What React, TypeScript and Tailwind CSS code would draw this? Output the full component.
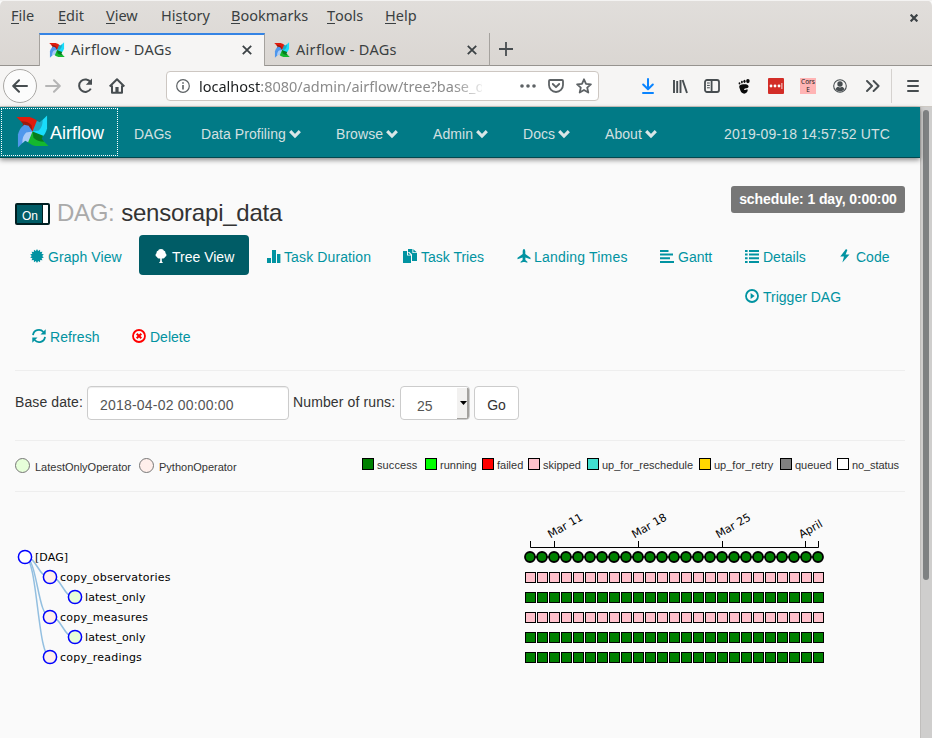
import React from "react";

function Pinwheel({ size }: { size: number }) {
  const blades = [
    ["#e01b0c", "#9c1a0e"],
    ["#19dcfa", "#1fa9c4"],
    ["#14b82e", "#067c1e"],
    ["#4f97ec", "#a9cbf7"],
  ];
  return (
    <svg width={size} height={size} viewBox="0 0 34 34" className="block shrink-0">
      {blades.map(([main, dark], i) => (
        <g key={main} transform={`rotate(${i * 90} 17 17)`}>
          <path d="M0.5 2 H14 C18 3 21.5 5 24 8.5 L23 13 L17 17 L11 12 L7 8.5 Z" fill={main} />
          <path d="M5 6.5 C10 6.5 13 7.5 16 10.5 L17 17 L6 12.5 L7.5 9.5 Z" fill={dark} />
        </g>
      ))}
    </svg>
  );
}

function Chevron() {
  return (
    <svg width="12" height="10" viewBox="0 0 12 10" className="mt-px shrink-0">
      <path d="M1.2 2.2 L6 7 L10.8 2.2" fill="none" stroke="#d9e6e7" strokeWidth="3.1" />
    </svg>
  );
}

function Close({ size = 10, width = 1.8 }: { size?: number; width?: number }) {
  return (
    <svg width={size} height={size} viewBox="0 0 10 10" className="shrink-0">
      <path d="M0.8 0.8 L9.2 9.2 M9.2 0.8 L0.8 9.2" stroke="#3c4245" strokeWidth={width} />
    </svg>
  );
}

const menus = [
  ["", "F", "ile", "w-[47px]"],
  ["", "E", "dit", "w-[48px]"],
  ["", "V", "iew", "w-[55px]"],
  ["Hi", "s", "tory", "w-[70px]"],
  ["", "B", "ookmarks", "w-[96px]"],
  ["", "T", "ools", "w-[58px]"],
  ["", "H", "elp", "w-[60px]"],
];

function MenuBar() {
  return (
    <div className="flex h-[33px] items-center border-t border-[#f4f3f2] pb-[3px] pl-[11px] pr-[14px] text-[#3a3f41]">
      {menus.map(([a, u, b, w]) => (
        <span key={b} className={`${w} flex shrink-0 text-[14.5px] leading-[15px]`}>
          {a}
          <span className="h-4 border-b border-[#3a3f41]">{u}</span>
          {b}
        </span>
      ))}
      <div className="mt-1 ml-auto">
        <Close size={8} width={2.8} />
      </div>
    </div>
  );
}

function TabBar() {
  return (
    <div className="flex h-[33px] text-[14.5px] text-[#3a3f41]">
      <div className="w-[39px] border-b border-[#96938f]" />
      <div className="flex w-[226px] items-center border-x border-t-2 border-x-[#a5a29e] border-t-[#3584e4] bg-[#f6f5f4] pb-[2px] pl-[9px] pr-[12px]">
        <Pinwheel size={16} />
        <span className="ml-[6px] tracking-[0.3px]">Airflow - DAGs</span>
        <div className="ml-auto"><Close /></div>
      </div>
      <div className="flex w-[225px] items-center border-b border-r border-b-[#96938f] border-r-[#a5a29e] pl-[9px] pr-[12px] pt-[2px]">
        <Pinwheel size={16} />
        <span className="ml-[6px] tracking-[0.3px]">Airflow - DAGs</span>
        <div className="ml-auto"><Close /></div>
      </div>
      <div className="flex flex-1 items-center border-b border-[#96938f] pl-[9px]">
        <svg width="14" height="14" viewBox="0 0 14 14">
          <path d="M7 0 V14 M0 7 H14" stroke="#474d50" strokeWidth="1.8" />
        </svg>
      </div>
    </div>
  );
}

function Toolbar() {
  const ink = "#474d50";
  return (
    <div className="flex h-[41px] items-center border-b border-[#cfcac4] bg-[#f6f5f4] pl-[3px]">
      <div className="flex size-[34px] shrink-0 items-center justify-center rounded-full border border-[#aaa8a5] bg-[#fcfcfc]">
        <svg width="16" height="14" viewBox="0 0 16 14" fill="none" stroke={ink} strokeWidth="2" strokeLinecap="round" strokeLinejoin="round">
          <path d="M15 7 H1.5 M7 1.2 L1.2 7 L7 12.8" />
        </svg>
      </div>
      <svg className="ml-2 shrink-0" width="16" height="14" viewBox="0 0 16 14" fill="none" stroke="#b5b5b5" strokeWidth="2" strokeLinecap="round" strokeLinejoin="round">
        <path d="M1 7 H14.5 M9 1.2 L14.8 7 L9 12.8" />
      </svg>
      <svg className="ml-4 shrink-0" width="16" height="16" viewBox="0 0 16 16" fill="none" stroke={ink} strokeWidth="2">
        <path d="M13.6 4.4 A6.2 6.2 0 1 0 13.8 10.6" />
        <path d="M15 0.5 V6.8 H8.8 Z" fill={ink} stroke="none" />
      </svg>
      <svg className="ml-4 shrink-0" width="16" height="16" viewBox="0 0 16 16">
        <path d="M0.7 8.5 L8 1.3 L15.3 8.5 M3 7.5 V14.8 H13 V7.5" fill="none" stroke={ink} strokeWidth="2" strokeLinejoin="round" />
        <path d="M6.4 9 H9.6 V15 H6.4 Z" fill={ink} />
      </svg>
      <div className="ml-[41px] flex h-[30px] w-[433px] shrink-0 items-center rounded-[4px] border border-[#cdc7c2] bg-white pl-[9px] pr-[6px]">
        <svg width="14" height="14" viewBox="0 0 14 14" className="shrink-0">
          <circle cx="7" cy="7" r="6.3" fill="none" stroke="#5d6265" strokeWidth="1.2" />
          <path d="M7 6 V10.5 M7 3.2 V4.8" stroke="#5d6265" strokeWidth="1.6" />
        </svg>
        <div className="ml-[9px] w-[283px] shrink-0 pt-px whitespace-nowrap text-[14.5px] text-[#8b8b8b] [mask-image:linear-gradient(to_right,#000_90%,transparent_102%)]">
          <span className="text-[#1c1f20]">localhost</span>:8080/admin/airflow/tree?base_d
        </div>
        <svg width="16" height="4" viewBox="0 0 16 4" className="ml-[38px] shrink-0" fill="#5d6265">
          <circle cx="2" cy="2" r="1.8" /><circle cx="8" cy="2" r="1.8" /><circle cx="14" cy="2" r="1.8" />
        </svg>
        <svg width="16" height="14" viewBox="0 0 16 14" className="ml-3 shrink-0" fill="none" stroke="#5d6265" strokeWidth="1.8" strokeLinecap="round" strokeLinejoin="round">
          <path d="M2 1 H14 Q15 1 15 2 V6 A7 7 0 0 1 1 6 V2 Q1 1 2 1 Z M4.8 5 L8 8.2 L11.2 5" />
        </svg>
        <svg width="16" height="16" viewBox="0 0 16 16" className="ml-3 shrink-0" fill="none" stroke="#5d6265" strokeWidth="1.8" strokeLinejoin="round">
          <path d="M8 1.3 L10 5.8 L14.9 6.3 L11.2 9.6 L12.3 14.5 L8 12 L3.7 14.5 L4.8 9.6 L1.1 6.3 L6 5.8 Z" />
        </svg>
      </div>
      <svg className="ml-[43px] shrink-0" width="12" height="16" viewBox="0 0 12 16" fill="none" stroke="#0a84ff" strokeWidth="2" strokeLinecap="round" strokeLinejoin="round">
        <path d="M6 1 V11 M1.2 6.5 L6 11.3 L10.8 6.5 M1 15 H11" />
      </svg>
      <svg className="ml-[19px] shrink-0" width="15" height="15" viewBox="0 0 15 15" stroke={ink} strokeWidth="1.9">
        <path d="M1 1 V14 M4.2 2 V14 M7.5 1 V14 M9.6 1 L14 14" />
      </svg>
      <svg className="ml-4 shrink-0" width="16" height="14" viewBox="0 0 16 14" fill="none" stroke={ink} strokeWidth="1.8">
        <rect x="1" y="1" width="14" height="12" rx="2" />
        <path d="M7.6 1 V13" />
        <path d="M3 4 H5.8 M3 6.4 H5.8 M3 8.8 H5.8" strokeWidth="1" />
      </svg>
      <svg className="ml-[18px] shrink-0" width="12" height="15" viewBox="0 0 12 15" fill="#0a0a0a">
        <path fillRule="evenodd" d="M1.6 6.6 C3.6 4.8 10.6 4.6 10.6 7.4 C10.4 9.8 7 8.6 6.2 10 C5.8 11.4 7.4 11.4 8 10.4 L9.8 10.6 C9.8 15.6 3.6 16 2.4 11.6 C2 9.8 0.6 8 1.6 6.6 Z" />
        <ellipse cx="9.9" cy="2.1" rx="1.8" ry="2.1" />
        <ellipse cx="6.5" cy="2.3" rx="1.1" ry="1.6" />
        <ellipse cx="3.9" cy="3.1" rx="0.9" ry="1.3" />
        <ellipse cx="1.5" cy="4.4" rx="0.9" ry="1.1" />
      </svg>
      <div className="ml-[18px] flex size-4 shrink-0 items-center justify-center rounded-[1px] bg-[#d32d27]">
        <svg width="14" height="6" viewBox="0 0 14 6" fill="#fff">
          <circle cx="2" cy="3" r="1.4" /><circle cx="6" cy="3" r="1.4" /><circle cx="10" cy="3" r="1.4" />
          <rect x="12.5" y="0" width="0.8" height="6" />
        </svg>
      </div>
      <div className="ml-4 flex size-4 shrink-0 flex-col items-center bg-[#ffb4b4] text-[6.5px] leading-[8px] text-[#222]">
        <span>Cors</span>
        <span>E</span>
      </div>
      <svg className="ml-[17px] shrink-0" width="14" height="14" viewBox="0 0 14 14">
        <circle cx="7" cy="7" r="6.3" fill="none" stroke={ink} strokeWidth="1.1" />
        <circle cx="7" cy="5" r="2.7" fill={ink} />
        <path d="M2.5 10 Q4 7.8 5 7.8 Q7 9 9 7.8 Q10 7.8 11.5 10 A5.3 5.3 0 0 1 2.5 10 Z" fill={ink} />
      </svg>
      <svg className="ml-[19px] shrink-0" width="14" height="12" viewBox="0 0 14 12" fill="none" stroke={ink} strokeWidth="1.9" strokeLinecap="round" strokeLinejoin="round">
        <path d="M1 1 L6 6 L1 11 M7.6 1 L12.6 6 L7.6 11" />
      </svg>
      <div className="ml-[11px] h-[34px] w-px shrink-0 bg-[#d5d2cf]" />
      <svg className="ml-[15px] shrink-0" width="12" height="12" viewBox="0 0 12 12" stroke={ink} strokeWidth="2" strokeLinecap="round">
        <path d="M1 1 H11 M1 6 H11 M1 11 H11" />
      </svg>
    </div>
  );
}

const navItems = [
  ["Data Profiling", "w-[135px]"],
  ["Browse", "w-[97px]"],
  ["Admin", "w-[90px]"],
  ["Docs", "w-[82px]"],
  ["About", "w-[100px]"],
];

function NavBar() {
  return (
    <nav className="relative flex h-[51px] shrink-0 items-center border-b border-[#03484f] bg-[#017a86] text-sm text-[#d3e0e1] shadow-[0_2px_5px_rgba(0,0,0,0.45)]">
      <div className="mb-px ml-px flex h-[48px] w-[117px] shrink-0 items-center border border-dotted border-white pl-[14px]">
        <Pinwheel size={33} />
        <span className="mt-[5px] ml-px text-[18px] text-white">Airflow</span>
      </div>
      <span className="ml-4 w-[67px] shrink-0 pt-[3px]">DAGs</span>
      {navItems.map(([label, w]) => (
        <span key={label} className={`${w} flex shrink-0 items-center gap-[3px] pt-[3px]`}>
          <span className="tracking-[0.06px]">{label}</span>
          <Chevron />
        </span>
      ))}
      <span className="mr-[30px] ml-auto pt-[3px] tracking-[0.14px] whitespace-nowrap">2019-09-18 14:57:52 UTC</span>
    </nav>
  );
}

function Glyph({ name }: { name: string }) {
  const teal = "#0193a1";
  const box = { width: 14, height: 14, viewBox: "0 0 14 14", className: "mt-[2px] shrink-0" };
  switch (name) {
    case "graph": {
      const pts = Array.from({ length: 28 }, (_, i) => {
        const r = i % 2 ? 5.1 : 7;
        const a = (i * Math.PI) / 14;
        return `${7 + r * Math.sin(a)},${7 - r * Math.cos(a)}`;
      }).join(" ");
      return <svg {...box}><polygon points={pts} fill={teal} /></svg>;
    }
    case "tree":
      return (
        <svg {...box} fill="#fff">
          <path d="M7 0 C9 0 9.6 1 9.9 1.7 C11.6 2 11.6 3.5 11.3 4 C13 5.2 12.8 7.5 11 7.9 C10.6 9.4 8.8 9.6 7.8 9.4 V12.2 L9 14 H5 L6.2 12.2 V9.4 C5.2 9.6 3.4 9.4 3 7.9 C1.2 7.5 1 5.2 2.7 4 C2.4 3.5 2.4 2 4.1 1.7 C4.4 1 5 0 7 0 Z" />
        </svg>
      );
    case "duration":
      return <svg {...box} fill={teal}><path d="M0 9 H4 V14 H0 Z M5 1 H9 V14 H5 Z M10 5 H13.4 V14 H10 Z" /></svg>;
    case "tries":
      return (
        <svg {...box} fill={teal}>
          <path d="M0 2 H4 V6.5 H8 V14 H0 Z" />
          <path d="M5 0 H9.4 V4 H14 V12 H9 V5.5 L6.5 3 H5 Z" />
          <path d="M10.3 0.2 L13.8 3.2 H10.3 Z M5 3.2 L7.6 5.7 H5 Z" />
        </svg>
      );
    case "landing":
      return (
        <svg {...box} fill={teal}>
          <path d="M7 0 C8 0 8.3 1.5 8.3 2.6 V5 L13.5 8.8 V10.2 L8.4 8.4 V11 L10.4 12.8 V13.8 L7.8 13 H6.2 L3.6 13.8 V12.8 L5.6 11 V8.4 L0.5 10.2 V8.8 L5.7 5 V2.6 C5.7 1.5 6 0 7 0 Z" />
        </svg>
      );
    case "gantt":
      return <svg {...box} fill={teal}><path d="M0 1 H8.5 V3 H0 Z M0 4.6 H13 V6.6 H0 Z M0 8.2 H10 V10.2 H0 Z M0 12 H14 V14 H0 Z" /></svg>;
    case "details":
      return (
        <svg {...box} fill={teal}>
          <path d="M0 1 H2.6 V3 H0 Z M4 1 H14 V3 H4 Z M0 4.6 H2.6 V6.6 H0 Z M4 4.6 H14 V6.6 H4 Z M0 8.2 H2.6 V10.2 H0 Z M4 8.2 H14 V10.2 H4 Z M0 12 H2.6 V14 H0 Z M4 12 H14 V14 H4 Z" />
        </svg>
      );
    case "code":
      return <svg {...box} fill={teal}><path d="M8 0 L2.2 7.6 H6 L4.4 13.5 L11.5 5.6 H7.6 L9.4 1 Z" /></svg>;
    case "trigger":
      return (
        <svg {...box}>
          <circle cx="7" cy="7" r="6" fill="none" stroke={teal} strokeWidth="1.8" />
          <path d="M5.6 4 L9.6 7 L5.6 10 Z" fill={teal} />
        </svg>
      );
    case "refresh":
      return (
        <svg {...box}>
          <path d="M1 6.2 C1.6 1 8 -0.8 11.4 3 M13 7.8 C12.4 13 6 14.8 2.6 11" fill="none" stroke={teal} strokeWidth="1.8" />
          <path d="M13.7 0.2 V5.4 H8.5 Z M0.3 13.8 V8.6 H5.5 Z" fill={teal} />
        </svg>
      );
    default:
      return (
        <svg {...box} fill="none" stroke="#f00">
          <circle cx="7" cy="7" r="6" strokeWidth="1.8" />
          <path d="M4.7 4.7 L9.3 9.3 M9.3 4.7 L4.7 9.3" strokeWidth="2" />
        </svg>
      );
  }
}

const views = [
  ["graph", "Graph View", "ml-[15px] w-[109px] gap-1 tracking-[0.08px]"],
  ["tree", "Tree View", "w-[110px] gap-1 rounded-[4px] bg-[#005c66] pl-[15px] text-white"],
  ["duration", "Task Duration", "ml-[18px] w-[136px] gap-[3px] tracking-[0.12px]"],
  ["tries", "Task Tries", "w-[114px] gap-1"],
  ["landing", "Landing Times", "w-[143px] gap-[3px] tracking-[0.2px]"],
  ["gantt", "Gantt", "w-[85px] gap-1"],
  ["details", "Details", "w-[93px] gap-1"],
  ["code", "Code", "w-[60px] gap-1"],
];

function Pills() {
  return (
    <div className="-mt-px text-sm text-[#0193a1]">
      <div className="flex">
        {views.map(([icon, label, w]) => (
          <a key={icon} className={`${w} flex h-10 shrink-0 items-center whitespace-nowrap`}>
            <Glyph name={icon} />
            <span className="pt-[3px]">{label}</span>
          </a>
        ))}
      </div>
      <div className="flex h-10 items-center gap-1 pl-[730px]">
        <Glyph name="trigger" />
        <span className="pt-[3px]">Trigger DAG</span>
      </div>
      <div className="flex h-10 items-center pl-[17px]">
        <a className="flex w-[100px] items-center gap-1"><Glyph name="refresh" /><span className="pt-[3px] tracking-[0.1px]">Refresh</span></a>
        <a className="flex items-center gap-1"><Glyph name="delete" /><span className="pt-[3px]">Delete</span></a>
      </div>
    </div>
  );
}

function RunForm() {
  return (
    <div className="flex h-[69px] items-start border-t border-[#eee] pt-[15px] text-sm text-[#333]">
      <span className="mt-[6px] w-[72px] shrink-0 tracking-[0.1px] whitespace-nowrap">Base date:</span>
      <div className="h-[34px] w-[202px] rounded-[4px] border border-[#ccc] bg-white pt-[8px] pl-[12px] tracking-[0.2px] text-[#555] shadow-[inset_0_1px_1px_rgba(0,0,0,0.075)]">
        2018-04-02 00:00:00
      </div>
      <span className="mt-[6px] ml-1 w-[107px] shrink-0 tracking-[0.12px] whitespace-nowrap">Number of runs:</span>
      <div className="flex h-[34px] w-[70px] overflow-hidden rounded-[4px] border border-[#ccc] bg-white text-[#555]">
        <span className="w-[56px] pt-[9px] pl-4">25</span>
        <div className="mt-px flex h-[32px] w-[12px] items-center justify-center border-r-2 border-b-2 border-[#a3a19e] bg-[#f2f1f0]">
          <svg width="7" height="4" viewBox="0 0 7 4" className="ml-[2px] shrink-0"><path d="M0 0 H7 L3.5 4 Z" fill="#000" /></svg>
        </div>
      </div>
      <button className="ml-1 h-[34px] w-[45px] rounded-[4px] border border-[#ccc] bg-white pt-[3px] text-[#333]">Go</button>
    </div>
  );
}

const states = [
  ["success", "bg-[#008000]", "w-[63px] tracking-[0.1px]"],
  ["running", "bg-[#00ff00]", "w-[57px]"],
  ["failed", "bg-[#ff0000]", "w-[46px]"],
  ["skipped", "bg-[#ffc0cb]", "w-[59px]"],
  ["up_for_reschedule", "bg-[#40e0d0]", "w-[112px]"],
  ["up_for_retry", "bg-[#ffd700]", "w-[81px]"],
  ["queued", "bg-[#808080]", "w-[57px]"],
  ["no_status", "bg-white", "w-[68px] tracking-[-0.1px]"],
];

function Legend() {
  return (
    <div className="flex h-[52px] items-start border-y border-[#eee] text-[11px] leading-[14px] text-[#333]">
      <div className="mt-[17px] flex w-[124px] items-start">
        <span className="size-[15px] rounded-full border border-[#777] bg-[#e6ffd9]" />
        <span className="ml-[5px] pt-[2px]">LatestOnlyOperator</span>
      </div>
      <div className="mt-[17px] flex items-start">
        <span className="size-[15px] rounded-full border border-[#777] bg-[#ffefeb]" />
        <span className="ml-[5px] pt-[2px]">PythonOperator</span>
      </div>
      <div className="mt-[17px] ml-auto flex">
        {states.map(([label, bg, w]) => (
          <div key={label} className={`${w} flex shrink-0 items-start`}>
            <span className={`${bg} size-3 shrink-0 border border-black`} />
            <span className="ml-[3px]">{label}</span>
          </div>
        ))}
      </div>
    </div>
  );
}

const nodes = [
  { x: 10, y: 65, label: "[DAG]", fill: "#fff" },
  { x: 35, y: 85, label: "copy_observatories", fill: "#ffefeb" },
  { x: 60, y: 105, label: "latest_only", fill: "#e6ffd9" },
  { x: 35, y: 125, label: "copy_measures", fill: "#ffefeb" },
  { x: 60, y: 145, label: "latest_only", fill: "#e6ffd9" },
  { x: 35, y: 165, label: "copy_readings", fill: "#ffefeb" },
];
const links = [[0, 1], [0, 3], [0, 5], [1, 2], [3, 4]];
const rowColors = ["#ffc0cb", "#008000", "#ffc0cb", "#008000", "#008000"];
const ticks: [number, string][] = [[539.5, "Mar 11"], [623.5, "Mar 18"], [707.5, "Mar 25"], [790.5, "April"]];

function TreeChart() {
  const runs = Array.from({ length: 25 }, (_, i) => i);
  return (
    <svg width="890" height="240" viewBox="0 0 890 240" className="block" fontFamily="'DejaVu Sans', sans-serif" fontSize="11">
      {links.map(([a, b]) => {
        const s = nodes[a];
        const t = nodes[b];
        const m = (s.x + t.x) / 2;
        return <path key={`${a}-${b}`} d={`M${s.x} ${s.y} C${m} ${s.y} ${m} ${t.y} ${t.x} ${t.y}`} fill="none" stroke="#93bfe0" strokeWidth="1.5" />;
      })}
      {nodes.map((n) => (
        <g key={n.y}>
          <circle cx={n.x} cy={n.y} r="6.6" fill={n.fill} stroke="#0000ff" strokeWidth="1.5" />
          <text x={n.x + 10} y={n.y + 4} fill="#000" letterSpacing={n.label.startsWith("copy") ? 0.21 : 0.08}>{n.label}</text>
        </g>
      ))}
      <path d="M515.5 49 V55.5 H803.5 V49" fill="none" stroke="#000" />
      {ticks.map(([x, label]) => (
        <g key={label}>
          <path d={`M${x} 49 V55`} stroke="#000" />
          <text transform={`translate(${x - 4} 46.5) rotate(-30)`}>{label}</text>
        </g>
      ))}
      <path d="M515 65 H803" stroke="#555" strokeWidth="2" />
      {runs.map((i) => (
        <circle key={i} cx={515 + i * 12} cy={65} r="5" fill="#008000" stroke="#000" strokeWidth="1.8" />
      ))}
      {rowColors.map((color, row) =>
        runs.map((i) => (
          <rect key={`${row}-${i}`} x={510.5 + i * 12} y={80.5 + row * 20} width="10" height="10" fill={color} stroke="#000" />
        ))
      )}
    </svg>
  );
}

export default function App() {
  return (
    <div className="flex h-[738px] w-[932px] flex-col overflow-hidden bg-[#fafafa]">
      <header className="shrink-0 rounded-t-[6px] bg-linear-to-b from-[#e1dedb] to-[#dad6d2] to-[66px] [font-family:'Noto_Sans',sans-serif]">
        <MenuBar />
        <TabBar />
        <Toolbar />
      </header>
      <div className="flex min-h-0 flex-1 [font-family:'Liberation_Sans',Arial,sans-serif]">
        <div className="flex w-[920px] shrink-0 flex-col">
          <NavBar />
          <main className="px-[15px] pt-[28px]">
            <div className="flex h-[50px] items-start">
              <div className="mt-[17px] flex h-[22px] w-[35px] rounded-[2px] border-2 border-[#001f22] bg-[#005c66] text-xs text-white">
                <span className="w-[25px] pt-[3px] pl-[5px] leading-[16px]">On</span>
                <span className="flex-1 border-l border-[#001f22] bg-white" />
              </div>
              <h3 className="mt-[11px] ml-[7px] text-2xl whitespace-nowrap text-[#333]">
                <span className="tracking-[-0.3px] text-[#aaa]">DAG:</span>{" "}
                <span className="tracking-[-0.22px]">sensorapi_data</span>
              </h3>
              <span className="ml-auto h-[27px] w-[174px] rounded-[3px] bg-[#777] pt-[3px] text-center text-sm font-bold tracking-[-0.1px] whitespace-nowrap text-white">
                schedule: 1 day, 0:00:00
              </span>
            </div>
            <Pills />
            <div className="h-[15px]" />
            <RunForm />
            <div className="h-px" />
            <Legend />
            <TreeChart />
          </main>
        </div>
        <div className="flex w-3 justify-center border-l border-[#c0bebc] bg-[#cfcecd] pt-[3px]">
          <div className="mr-[1px] h-[470px] w-[6px] rounded-[3px] bg-[#7e8182]" />
        </div>
      </div>
    </div>
  );
}
